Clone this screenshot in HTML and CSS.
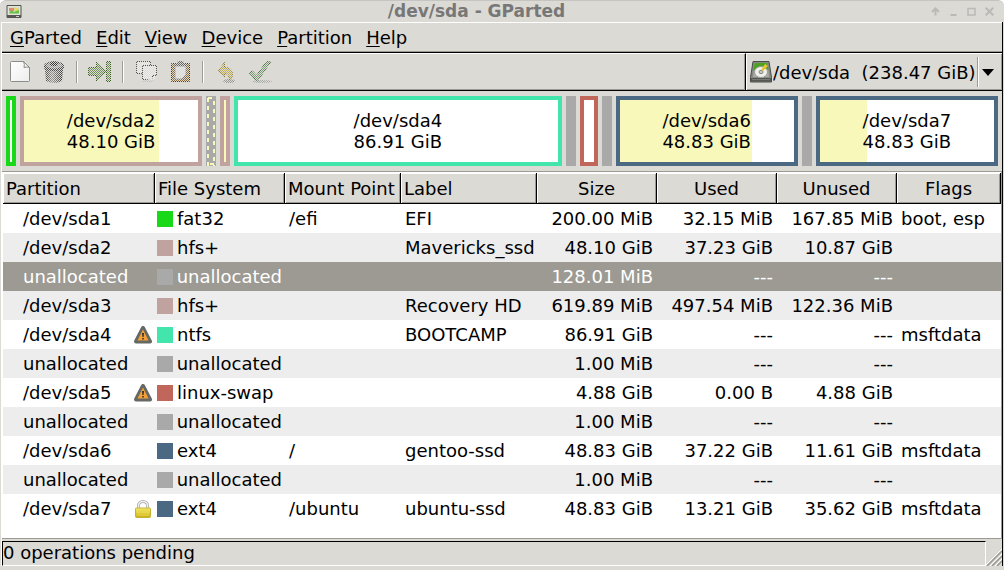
FILE: index.html
```html
<!DOCTYPE html>
<html lang="en">
<head>
<meta charset="utf-8">
<meta name="viewport" content="width=device-width, initial-scale=1">
<title>/dev/sda - GParted</title>
<link rel="stylesheet" href="styles.css">
</head>
<body>
<svg class="defs" width="0" height="0" aria-hidden="true">
  <defs>
    <pattern id="checker" width="2" height="2" patternUnits="userSpaceOnUse">
      <path d="M0 0h1v1H0zM1 1h1v1H1z" fill="#fff" shape-rendering="crispEdges"/>
    </pattern>
    <mask id="dither" maskUnits="userSpaceOnUse" x="0" y="0" width="24" height="24"><rect width="24" height="24" fill="url(#checker)"/></mask>
    <linearGradient id="paper" x2="1" y2="1"><stop offset="0" stop-color="#fff"/><stop offset="1" stop-color="#ececec"/></linearGradient>
    <linearGradient id="can"><stop offset="0" stop-color="#444"/><stop offset=".4" stop-color="#999"/><stop offset="1" stop-color="#333"/></linearGradient>
    <linearGradient id="gold" x2="0" y2="1"><stop offset="0" stop-color="#f6ee70"/><stop offset="1" stop-color="#c9ac10"/></linearGradient>
    <symbol id="warning" viewBox="0 0 18 18">
      <path d="M9 2 16 15.500H2z" fill="#666863" stroke="#666863" stroke-width="4" stroke-linejoin="round"/>
      <path d="M9 3.500 14.500 14.500H3.500z" fill="#f5a037"/>
      <path d="M8 7h2l-.4 4H8.400zM8.200 12h1.600v1.600H8.200z" fill="#33302a"/>
    </symbol>
    <symbol id="lock" viewBox="0 0 18 18">
      <path d="M4.500 9V5.500a4.500 4 0 0 1 9 0V9" fill="none" stroke="#aaa" stroke-width="3"/>
      <path d="M4.500 9V5.500a4.500 4 0 0 1 9 0V9" fill="none" stroke="#eee" stroke-width="1.500"/>
      <rect x="1.500" y="8" width="15" height="9.500" rx="1" fill="url(#gold)" stroke="#c4b135"/>
      <path d="M3 10h12M3 12.500h12M3 15h12" stroke="#e9d94a"/>
    </symbol>
  </defs>
</svg>
<div class="window">
  <header class="titlebar">
    <svg width="16" height="16" viewBox="0 0 16 16" aria-hidden="true">
      <path d="M1 1.500h14v12H1z" fill="#e4e4df" stroke="#50524e"/>
      <path d="M3 3.500h10v6H3z" fill="#c5dba8"/><path d="M3 4h5v3H3z" fill="#e08a70"/><path d="M8 3.500l4 1-2 3z" fill="#f3d447"/><path d="M5 6l3 2 5-2v3.500H3z" fill="#6cc04a"/>
      <path d="M1 11h14v3H1z" fill="#555753"/><path d="M10 12h3v1h-3z" fill="#ccc"/>
    </svg>
    <h1>/dev/sda - GParted</h1>
    <div class="window-buttons">
      <button type="button" aria-label="Shade"><svg width="9" height="9" viewBox="0 0 9 9"><path d="M4.500 8.500V2M1 5l3.500-3.500L8 5" fill="none" stroke="#bbb9b5" stroke-width="2"/></svg></button>
      <button type="button" aria-label="Minimize"><svg width="9" height="9" viewBox="0 0 9 9"><path d="M1.500 7h6v2h-6z" fill="#bbb9b5"/></svg></button>
      <button type="button" aria-label="Maximize"><svg width="9" height="9" viewBox="0 0 9 9"><path d="M1 1.500h7v6.500H1z" fill="none" stroke="#bbb9b5" stroke-width="1.500"/></svg></button>
      <button type="button" aria-label="Close"><svg width="9" height="9" viewBox="0 0 9 9"><path d="M.7.7l7.600 7.600M8.300.7L.7 8.300" stroke="#bbb9b5" stroke-width="2"/></svg></button>
    </div>
  </header>
  <div class="frame">
    <nav class="menubar">
      <button type="button"><u>G</u>Parted</button>
      <button type="button"><u>E</u>dit</button>
      <button type="button"><u>V</u>iew</button>
      <button type="button"><u>D</u>evice</button>
      <button type="button"><u>P</u>artition</button>
      <button type="button"><u>H</u>elp</button>
    </nav>
    <div class="toolbar">
      <div class="tools">
        <button type="button" aria-label="New"><svg width="24" height="24" viewBox="0 0 24 24"><path d="M3.500 1.500h12l6 6v13a1 1 0 0 1-1 1h-17a1 1 0 0 1-1-1v-18a1 1 0 0 1 1-1z" fill="url(#paper)" stroke="#8c8e89"/><path d="M15.500 1.500q1.500 3 .5 6 3-1 5.500 0z" fill="#f5f5f3" stroke="#8c8e89" stroke-linejoin="round"/></svg></button>
        <button type="button" aria-label="Delete" disabled><svg width="24" height="24" viewBox="0 0 24 24"><g mask="url(#dither)"><path d="M3 8h18l-1 13q-8 4-16 0z" fill="url(#can)"/><path d="M2 6q0-3 5-4 5-2 10 0 5 1 5 4v2q-1 3-10 3T2 8z" fill="#4a4a4a"/><ellipse cx="12" cy="5.500" rx="8" ry="3" fill="#999"/><ellipse cx="12" cy="4" rx="4" ry="2" fill="#333"/></g></svg></button>
        <span class="separator"></span>
        <button type="button" aria-label="Resize/Move" disabled><svg width="24" height="24" viewBox="0 0 24 24"><g mask="url(#dither)" fill="#6f9158" stroke="#3c5f22"><path d="M.5 7.500h8v-6l9 10-9 10v-6h-8z"/><path d="M18.500 1.500h4v20h-4z"/></g></svg></button>
        <span class="separator"></span>
        <button type="button" aria-label="Copy" disabled><svg width="24" height="24" viewBox="0 0 24 24"><g mask="url(#dither)" fill="#eee" stroke="#555"><path d="M2.500 1.500h14v12h-14z"/><path d="M8.500 5.500h14v10l-4 4h-10z"/><path d="M18.500 19.500v-4h4"/><path d="M9 21h10l4-4" stroke="#aaa"/></g></svg></button>
        <button type="button" aria-label="Paste" disabled><svg width="24" height="24" viewBox="0 0 24 24"><g mask="url(#dither)"><path d="M3.500 3.500h18v18h-18z" fill="#8d6d3c" stroke="#4f3a16"/><path d="M7 6h11v9l-4 4H7z" fill="#e6e6e6" stroke="#777"/><path d="M6 6V4l3-1 1-2h5l1 2 3 1v2z" fill="#666"/></g></svg></button>
        <span class="separator"></span>
        <button type="button" aria-label="Undo" disabled><svg width="24" height="24" viewBox="0 0 24 24"><g mask="url(#dither)"><ellipse cx="15" cy="21" rx="6" ry="2" fill="#999"/><path d="M10.500 2.500v5q8 0 8 7 0 4-3 6 0-7-5-7v4l-6-7z" fill="#bfae56" stroke="#8a7726"/></g></svg></button>
        <button type="button" aria-label="Apply" disabled><svg width="24" height="24" viewBox="0 0 24 24"><g mask="url(#dither)"><ellipse cx="14" cy="21.500" rx="10" ry="1.500" fill="#aaa"/><path d="M.5 13.500l4-2.500 4 4.500 10-14 4 .5-13 19z" fill="#7d9f74" stroke="#476b41"/></g></svg></button>
      </div>
      <label class="device">
        <svg width="22" height="22" viewBox="0 0 22 22" aria-hidden="true"><path d="M3 .5h16l2.500 16v4.500H.5v-4.500z" fill="#888a85" stroke="#4b4d48"/><path d="M4.500 2h13l1.500 14H3z" fill="#a9aba6"/><path d="M4.500 2h13l1 7-7-3-8 4z" fill="#4da321"/><ellipse cx="11" cy="11" rx="6.500" ry="5.500" fill="#f0f1ed" stroke="#9a9c96"/><ellipse cx="11" cy="11" rx="2" ry="1.700" fill="#c5c7c2" stroke="#888"/><path d="M11 9l4-6 3 2-5 5z" fill="#e7c631"/><path d="M1 17h20v3.500H1z" fill="#555753"/><path d="M2 18.500h18" stroke="#777973"/></svg>
        <select aria-label="Device"><option>/dev/sda&nbsp; (238.47 GiB)</option></select>
        <span class="separator tall"></span>
        <svg width="12" height="7" viewBox="0 0 12 7" aria-hidden="true"><path d="M0 0h12L6 7z"/></svg>
      </label>
    </div>
    <section class="disk" aria-label="Partition layout">
      <div class="part small fat32"></div>
      <div class="part wide hfs"><span class="used" style="width:77.500%"></span><span class="caption">/dev/sda2<br>48.10 GiB</span></div>
      <div class="part small free"><svg width="10" height="70" viewBox="0 0 10 70"><path d="M2 2v68M8 5v65M2 2h6M4 68h4" fill="none" stroke="#f8f8ba" stroke-width="2" stroke-dasharray="4 4"/></svg></div>
      <div class="part small hfs"><span class="used" style="width:100%"></span></div>
      <div class="part widest ntfs"><span class="caption">/dev/sda4<br>86.91 GiB</span></div>
      <div class="part small free"></div>
      <div class="part medium swap"></div>
      <div class="part small free"></div>
      <div class="part wide ext4"><span class="used" style="width:76%"></span><span class="caption">/dev/sda6<br>48.83 GiB</span></div>
      <div class="part small free"></div>
      <div class="part wide ext4"><span class="used" style="width:27%"></span><span class="caption">/dev/sda7<br>48.83 GiB</span></div>
    </section>
    <main class="list">
      <table>
        <colgroup><col class="c-partition"><col class="c-fs"><col class="c-mount"><col class="c-label"><col class="c-num"><col class="c-num"><col class="c-num"><col></colgroup>
        <thead><tr><th>Partition</th><th>File System</th><th>Mount Point</th><th>Label</th><th class="mid">Size</th><th class="mid">Used</th><th class="mid">Unused</th><th class="mid">Flags</th></tr></thead>
        <tbody>
          <tr><td><div class="name">/dev/sda1</div></td><td><div class="fs"><i class="swatch fat32"></i>fat32</div></td><td>/efi</td><td>EFI</td><td>200.00 MiB</td><td>32.15 MiB</td><td>167.85 MiB</td><td>boot, esp</td></tr>
          <tr><td><div class="name">/dev/sda2</div></td><td><div class="fs"><i class="swatch hfs"></i>hfs+</div></td><td></td><td>Mavericks_ssd</td><td>48.10 GiB</td><td>37.23 GiB</td><td>10.87 GiB</td><td></td></tr>
          <tr class="selected"><td><div class="name">unallocated</div></td><td><div class="fs"><i class="swatch free"></i>unallocated</div></td><td></td><td></td><td>128.01 MiB</td><td>---</td><td>---</td><td></td></tr>
          <tr><td><div class="name">/dev/sda3</div></td><td><div class="fs"><i class="swatch hfs"></i>hfs+</div></td><td></td><td>Recovery HD</td><td>619.89 MiB</td><td>497.54 MiB</td><td>122.36 MiB</td><td></td></tr>
          <tr><td><div class="name">/dev/sda4<svg width="18" height="18"><use href="#warning"/></svg></div></td><td><div class="fs"><i class="swatch ntfs"></i>ntfs</div></td><td></td><td>BOOTCAMP</td><td>86.91 GiB</td><td>---</td><td>---</td><td>msftdata</td></tr>
          <tr><td><div class="name">unallocated</div></td><td><div class="fs"><i class="swatch free"></i>unallocated</div></td><td></td><td></td><td>1.00 MiB</td><td>---</td><td>---</td><td></td></tr>
          <tr><td><div class="name">/dev/sda5<svg width="18" height="18"><use href="#warning"/></svg></div></td><td><div class="fs"><i class="swatch swap"></i>linux-swap</div></td><td></td><td></td><td>4.88 GiB</td><td>0.00 B</td><td>4.88 GiB</td><td></td></tr>
          <tr><td><div class="name">unallocated</div></td><td><div class="fs"><i class="swatch free"></i>unallocated</div></td><td></td><td></td><td>1.00 MiB</td><td>---</td><td>---</td><td></td></tr>
          <tr><td><div class="name">/dev/sda6</div></td><td><div class="fs"><i class="swatch ext4"></i>ext4</div></td><td>/</td><td>gentoo-ssd</td><td>48.83 GiB</td><td>37.22 GiB</td><td>11.61 GiB</td><td>msftdata</td></tr>
          <tr><td><div class="name">unallocated</div></td><td><div class="fs"><i class="swatch free"></i>unallocated</div></td><td></td><td></td><td>1.00 MiB</td><td>---</td><td>---</td><td></td></tr>
          <tr><td><div class="name">/dev/sda7<svg width="18" height="18"><use href="#lock"/></svg></div></td><td><div class="fs"><i class="swatch ext4"></i>ext4</div></td><td>/ubuntu</td><td>ubuntu-ssd</td><td>48.83 GiB</td><td>13.21 GiB</td><td>35.62 GiB</td><td>msftdata</td></tr>
        </tbody>
      </table>
    </main>
    <footer class="statusbar">
      <div class="status">0 operations pending</div>
      <svg width="16" height="17" viewBox="0 0 16 17" aria-hidden="true"><path d="M1 17L16 2M6 17L16 7M11 17l5-5" stroke="#9a9890" stroke-width="1.500"/><path d="M-1 17L16 0M4 17L16 5M9 17l7-7" stroke="#fff"/></svg>
    </footer>
  </div>
</div>
</body>
</html>
```
FILE: styles.css
```css
* { box-sizing: border-box; }
:root {
  --bg: #dcdad5;
  --shade: #9c9a92;
  --fat32: #18d918;
  --hfs: #c0a39e;
  --ntfs: #42e5ac;
  --swap: #c1665a;
  --ext4: #4b6983;
  --free: #a9a9a9;
}
body {
  margin: 0;
  background: #fff;
  color: #000;
  font: 18px/21px "DejaVu Sans", sans-serif;
}
button, select { font: inherit; color: inherit; background: none; border: 0; padding: 0; margin: 0; }
svg { display: block; flex: none; }
.defs { position: absolute; }
.window {
  display: flex;
  flex-direction: column;
  min-height: 100vh;
  background: var(--bg);
  border-top: 1px solid #c6c4c0;
  border-radius: 6px 6px 0 0;
}
.titlebar { display: flex; align-items: center; height: 21px; padding: 0 10px 0 6px; }
.titlebar h1 { flex: 1; margin: 0; text-align: center; font-size: 17px; line-height: 21px; font-weight: bold; color: #777; }
.window-buttons { display: flex; gap: 9px; }
.frame {
  flex: 1;
  display: flex;
  flex-direction: column;
  margin: 0 1px 4px 1px;
  border-left: 1px solid #fff;
  border-right: 1px solid #000;
}
.menubar {
  display: flex;
  gap: 14px;
  height: 31px;
  padding: 0 8px;
  border-top: 1px solid #fff;
  border-bottom: 1px solid #000;
  box-shadow: inset 0 -1px var(--shade);
}
.menubar u { text-decoration-thickness: 1px; text-underline-offset: 2px; }
.toolbar { display: flex; height: 38px; border-bottom: 1px solid #000; }
.tools {
  flex: 1;
  display: flex;
  align-items: center;
  padding-left: 6px;
  border-top: 1px solid #fff;
  box-shadow: inset -1px -1px var(--shade);
}
.tools button { width: 34px; display: flex; }
.separator { width: 2px; height: 22px; margin-right: 10px; border-left: 1px solid var(--shade); border-right: 1px solid #fff; }
.device {
  display: flex;
  align-items: center;
  padding: 0 8px 0 4px;
  border-left: 1px solid #000;
  border-top: 1px solid #fff;
  box-shadow: inset 1px 0 #fff, inset -1px -1px var(--shade);
}
.device select { appearance: none; height: 30px; margin-left: 1px; }
.separator.tall { height: 30px; margin: 0 3px 0 1px; }
.disk { display: flex; gap: 4px; padding: 5px 4px; }
.part {
  position: relative;
  display: flex;
  align-items: center;
  justify-content: center;
  height: 70px;
  min-width: 0;
  border: 4px solid;
  background: #fff;
}
.small { flex: 0 0 10px; }
.medium { flex: 0 0 18px; }
.wide { flex: 182 1 182px; }
.widest { flex: 327 1 327px; }
.part.fat32 { border-color: var(--fat32); }
.part.hfs { border-color: var(--hfs); }
.part.ntfs { border-color: var(--ntfs); }
.part.swap { border-color: var(--swap); }
.part.ext4 { border-color: var(--ext4); }
.part.free { border: 0; background: var(--free); }
.used { position: absolute; inset: 0 auto 0 0; background: #f8f8ba; }
.caption { position: relative; }
.list {
  flex: 1;
  background: #fff;
  border: 1px solid var(--shade);
  border-left: 0;
  padding: 1px 0 0 1px;
}
table { width: 100%; table-layout: fixed; border-collapse: separate; border-spacing: 0; }
.c-partition { width: 152px; }
.c-fs { width: 130px; }
.c-mount { width: 116px; }
.c-label { width: 136px; }
.c-num { width: 120px; }
th {
  height: 31px;
  padding: 0 0 0 3px;
  background: var(--bg);
  border-right: 1px solid #000;
  border-bottom: 1px solid #000;
  box-shadow: inset 1px 1px #fff, inset -1px -1px var(--shade);
  font-weight: normal;
  text-align: left;
  white-space: nowrap;
}
th.mid { padding: 0; text-align: center; }
td { height: 29px; padding: 0 4px; white-space: nowrap; }
td:nth-child(n+5):nth-child(-n+7) { text-align: right; }
td:nth-child(1), td:nth-child(2) { padding: 0 3px 0 2px; }
tbody tr:nth-child(even) { background: #ededed; }
tbody tr.selected { background: var(--shade); color: #fff; }
.name { display: flex; align-items: center; justify-content: space-between; padding-left: 18px; }
.fs { display: flex; align-items: center; gap: 4px; }
.swatch { width: 16px; height: 16px; }
.swatch.fat32 { background: var(--fat32); }
.swatch.hfs { background: var(--hfs); }
.swatch.ntfs { background: var(--ntfs); }
.swatch.swap { background: var(--swap); }
.swatch.ext4 { background: var(--ext4); }
.swatch.free { background: var(--free); }
.statusbar { display: flex; align-items: flex-end; padding-top: 2px; }
.status { flex: 1; height: 25px; border: 1px solid #000; border-right-color: #fff; border-bottom-color: #fff; }
```
